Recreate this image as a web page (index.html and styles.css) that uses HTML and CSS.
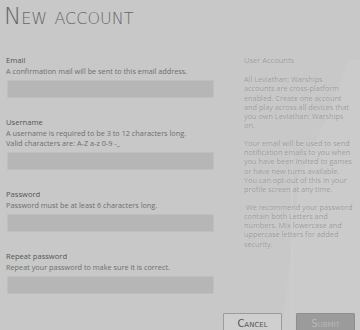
FILE: index.html
```html
<!DOCTYPE html>
<html lang="en">
<head>
  <meta charset="UTF-8" />
  <title>New account</title>
  <link rel="stylesheet" href="styles.css">
</head>
<body>
  <svg class="watermark" width="130" height="330" viewBox="0 0 130 330" aria-hidden="true">
    <path d="M118 60 L96 118 L70 175 L52 330 L130 330 L130 60 Z" fill="#cbcbcb"/>
    <path d="M62 150 L62 330" stroke="#cfcfcf" stroke-width="1"/>
  </svg>

  <h1 class="title">New account</h1>

  <div class="layout">
    <form class="form">
      <div class="field">
        <label>Email</label>
        <p class="hint">A confirmation mail will be sent to this email address.</p>
        <input type="email">
      </div>
      <div class="field">
        <label>Username</label>
        <p class="hint">A username is required to be 3 to 12 characters long.<br>Valid characters are: A-Z a-z 0-9 -_</p>
        <input type="text">
      </div>
      <div class="field">
        <label>Password</label>
        <p class="hint">Password must be at least 6 characters long.</p>
        <input type="password">
      </div>
      <div class="field">
        <label>Repeat password</label>
        <p class="hint">Repeat your password to make sure it is correct.</p>
        <input type="password">
      </div>
    </form>

    <aside class="info">
      <h2>User Accounts</h2>
      <p>All Leviathan: Warships<br>accounts are cross-platform<br>enabled. Create one account<br>and play across all devices that<br>you own Leviathan: Warships<br>on.</p>
      <p>Your email will be used to send<br>notification emails to you when<br>you have been invited to games<br>or have new turns available.<br>You can opt-out of this in your<br>profile screen at any time.</p>
      <p>&nbsp;We recommend your password<br>contain both Letters and<br>numbers. Mix lowercase and<br>uppercase letters for added<br>security.</p>
    </aside>
  </div>

  <div class="actions">
    <button class="btn">Cancel</button>
    <button class="btn submit">Submit</button>
  </div>
</body>
</html>
```

FILE: styles.css
```css
body {
  margin: 0;
  width: 360px;
  height: 330px;
  overflow: hidden;
  position: relative;
  background-color: #c8c8c8;
  font-family: 'Open Sans', sans-serif;
  color: #5c5c5c;
}

.watermark {
  position: absolute;
  top: 0;
  right: 0;
}

.title {
  position: relative;
  margin: 0;
  padding: 1px 0 0 4px;
  height: 54px;
  font-family: 'DejaVu Sans', sans-serif;
  font-weight: 200;
  font-variant: small-caps;
  font-size: 23px;
  line-height: 30px;
  color: #666;
}

.layout {
  position: relative;
  display: flex;
  gap: 31px;
}

.form {
  width: 207px;
  padding-left: 6px;
  display: flex;
  flex-direction: column;
  gap: 19px;
}

.field label {
  display: block;
  font-size: 7.6px;
  line-height: 11px;
  color: #555;
}

.hint {
  margin: 0;
  font-size: 7.3px;
  line-height: 10px;
  color: #6e6e6e;
}

.field input {
  display: block;
  box-sizing: border-box;
  width: 207px;
  height: 18px;
  margin: 4px 0 0 1px;
  background-color: #b6b6b6;
  border: 1px solid #bfbfbf;
  border-radius: 1px;
}

.info {
  font-size: 7.3px;
  line-height: 9.3px;
  color: #979797;
  text-shadow: 0 0 1px #e2e2e2;
}

.info h2 {
  margin: 0 0 9px;
  font-size: 7.5px;
  font-weight: 400;
  line-height: 11px;
}

.info p {
  margin: 0 0 8px;
}

.actions {
  position: relative;
  display: flex;
  justify-content: flex-end;
  gap: 14px;
  padding: 19px 5px 0 0;
}

.btn {
  width: 59px;
  height: 20px;
  padding: 0;
  font-family: 'DejaVu Sans', sans-serif;
  font-variant: small-caps;
  font-size: 10px;
  color: #555;
  background-color: #cfcfcf;
  border: 1px solid #9c9c9c;
  border-radius: 1px;
}

.btn.submit {
  background-color: #9b9b9b;
  border-color: #8e8e8e;
  color: #b8b8b8;
}
```
